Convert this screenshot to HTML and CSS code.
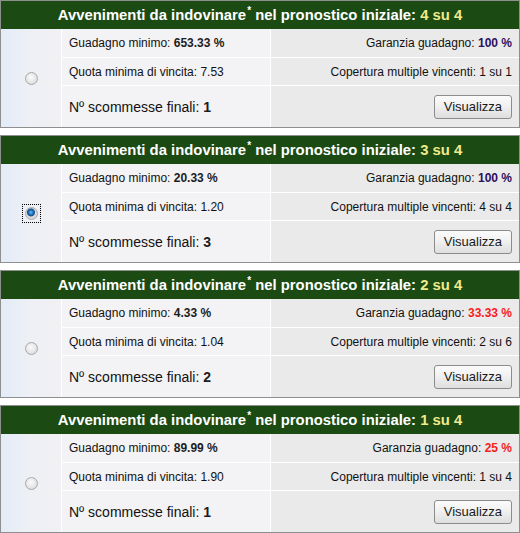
FILE: index.html
```html
<!DOCTYPE html>
<html>
	<head>
		<meta charset="UTF-8">
		<link rel="stylesheet" href="styles.css">
	</head>
	<body>
		<div class="pick">
			<div class="pickHead">Avvenimenti da indovinare<sup>*</sup> nel pronostico iniziale: <span class="hit">4 su 4</span></div>
			<div class="pickBody">
				<div class="pickRadio"><span class="radioWrap"><input type="radio" name="pick" value="4"></span></div>
				<div class="cell">Guadagno minimo:&nbsp;<b>653.33 %</b></div>
				<div class="cell right">Garanzia guadagno:&nbsp;<b class="full">100 %</b></div>
				<div class="cell">Quota minima di vincita: 7.53</div>
				<div class="cell right">Copertura multiple vincenti: 1 su 1</div>
				<div class="cell big">Nº scommesse finali:&nbsp;<b>1</b></div>
				<div class="cell right"><button type="button" class="showBTN">Visualizza</button></div>
			</div>
		</div>

		<div class="pick">
			<div class="pickHead">Avvenimenti da indovinare<sup>*</sup> nel pronostico iniziale: <span class="hit">3 su 4</span></div>
			<div class="pickBody">
				<div class="pickRadio"><span class="radioWrap focused"><input type="radio" name="pick" value="3" checked></span></div>
				<div class="cell">Guadagno minimo:&nbsp;<b>20.33 %</b></div>
				<div class="cell right">Garanzia guadagno:&nbsp;<b class="full">100 %</b></div>
				<div class="cell">Quota minima di vincita: 1.20</div>
				<div class="cell right">Copertura multiple vincenti: 4 su 4</div>
				<div class="cell big">Nº scommesse finali:&nbsp;<b>3</b></div>
				<div class="cell right"><button type="button" class="showBTN">Visualizza</button></div>
			</div>
		</div>

		<div class="pick">
			<div class="pickHead">Avvenimenti da indovinare<sup>*</sup> nel pronostico iniziale: <span class="hit">2 su 4</span></div>
			<div class="pickBody">
				<div class="pickRadio"><span class="radioWrap"><input type="radio" name="pick" value="2"></span></div>
				<div class="cell">Guadagno minimo:&nbsp;<b>4.33 %</b></div>
				<div class="cell right">Garanzia guadagno:&nbsp;<b class="part">33.33 %</b></div>
				<div class="cell">Quota minima di vincita: 1.04</div>
				<div class="cell right">Copertura multiple vincenti: 2 su 6</div>
				<div class="cell big">Nº scommesse finali:&nbsp;<b>2</b></div>
				<div class="cell right"><button type="button" class="showBTN">Visualizza</button></div>
			</div>
		</div>

		<div class="pick">
			<div class="pickHead">Avvenimenti da indovinare<sup>*</sup> nel pronostico iniziale: <span class="hit">1 su 4</span></div>
			<div class="pickBody">
				<div class="pickRadio"><span class="radioWrap"><input type="radio" name="pick" value="1"></span></div>
				<div class="cell">Guadagno minimo:&nbsp;<b>89.99 %</b></div>
				<div class="cell right">Garanzia guadagno:&nbsp;<b class="part">25 %</b></div>
				<div class="cell">Quota minima di vincita: 1.90</div>
				<div class="cell right">Copertura multiple vincenti: 1 su 4</div>
				<div class="cell big">Nº scommesse finali:&nbsp;<b>1</b></div>
				<div class="cell right"><button type="button" class="showBTN">Visualizza</button></div>
			</div>
		</div>
	</body>
</html>
```

FILE: styles.css
```css
body {
	margin: 0;
	background-color: white;
	font-family: 'Liberation Sans', Arial, sans-serif;
	color: #111;
}

.pick {
	width: 518px;
	border: 1px solid #8f8f8f;
	margin-bottom: 7px;
}

.pickHead {
	height: 28px;
	line-height: 28px;
	background-color: #1b4a13;
	color: white;
	font-size: 14.85px;
	font-weight: bold;
	text-align: center;
	white-space: nowrap;
}

.pickHead sup {
	font-size: 10px;
	line-height: 0;
	vertical-align: 6px;
	margin-left: 1px;
}

.hit {
	color: #efeb8c;
}

.pickBody {
	display: grid;
	grid-template-columns: 60px 208px 1fr;
	grid-template-rows: 28px 27px 41px;
	gap: 1px;
	background-color: white;
}

.pickRadio {
	grid-row: 1 / 4;
	display: flex;
	align-items: center;
	justify-content: center;
	background: linear-gradient(to right, #e3ecf8, #eef0f5 50%, #f1f0f3);
}

.radioWrap {
	display: flex;
	padding: 2px;
	border: 1px dotted transparent;
}

.radioWrap.focused {
	border-color: #000;
}

.cell {
	display: flex;
	align-items: center;
	padding: 0 7px;
	background-color: #f3f2f4;
	font-size: 12px;
	white-space: nowrap;
}

.cell.right {
	justify-content: flex-end;
	background-color: #ebeaeb;
}

.cell.big {
	font-size: 14px;
}

.cell b {
	color: #1d1d1d;
}

.cell b.full {
	color: #2e0f5c;
}

.cell b.part {
	color: #f51d1d;
}

.showBTN {
	height: 24px;
	padding: 0 9px;
	border: 1px solid #8c8c8c;
	border-radius: 3px;
	background: linear-gradient(#fbfbfb, #f1f1f1 45%, #dedede);
	font-family: 'Liberation Sans', Arial, sans-serif;
	font-size: 13px;
	color: #1a1a1a;
}

input[type="radio"] {
	appearance: none;
	-webkit-appearance: none;
	margin: 0;
	width: 13px;
	height: 13px;
	border: 1px solid #a9a9a9;
	border-radius: 50%;
	background: radial-gradient(circle at 45% 40%, #fbfbfb, #e4e4e4 60%, #cfcfcf);
}

input[type="radio"]:checked {
	background: radial-gradient(circle at 45% 40%, #6ec0f0 0, #2a78c0 2px, #124f93 3.5px, #dcdcdc 4.5px, #cfcfcf);
}
```
